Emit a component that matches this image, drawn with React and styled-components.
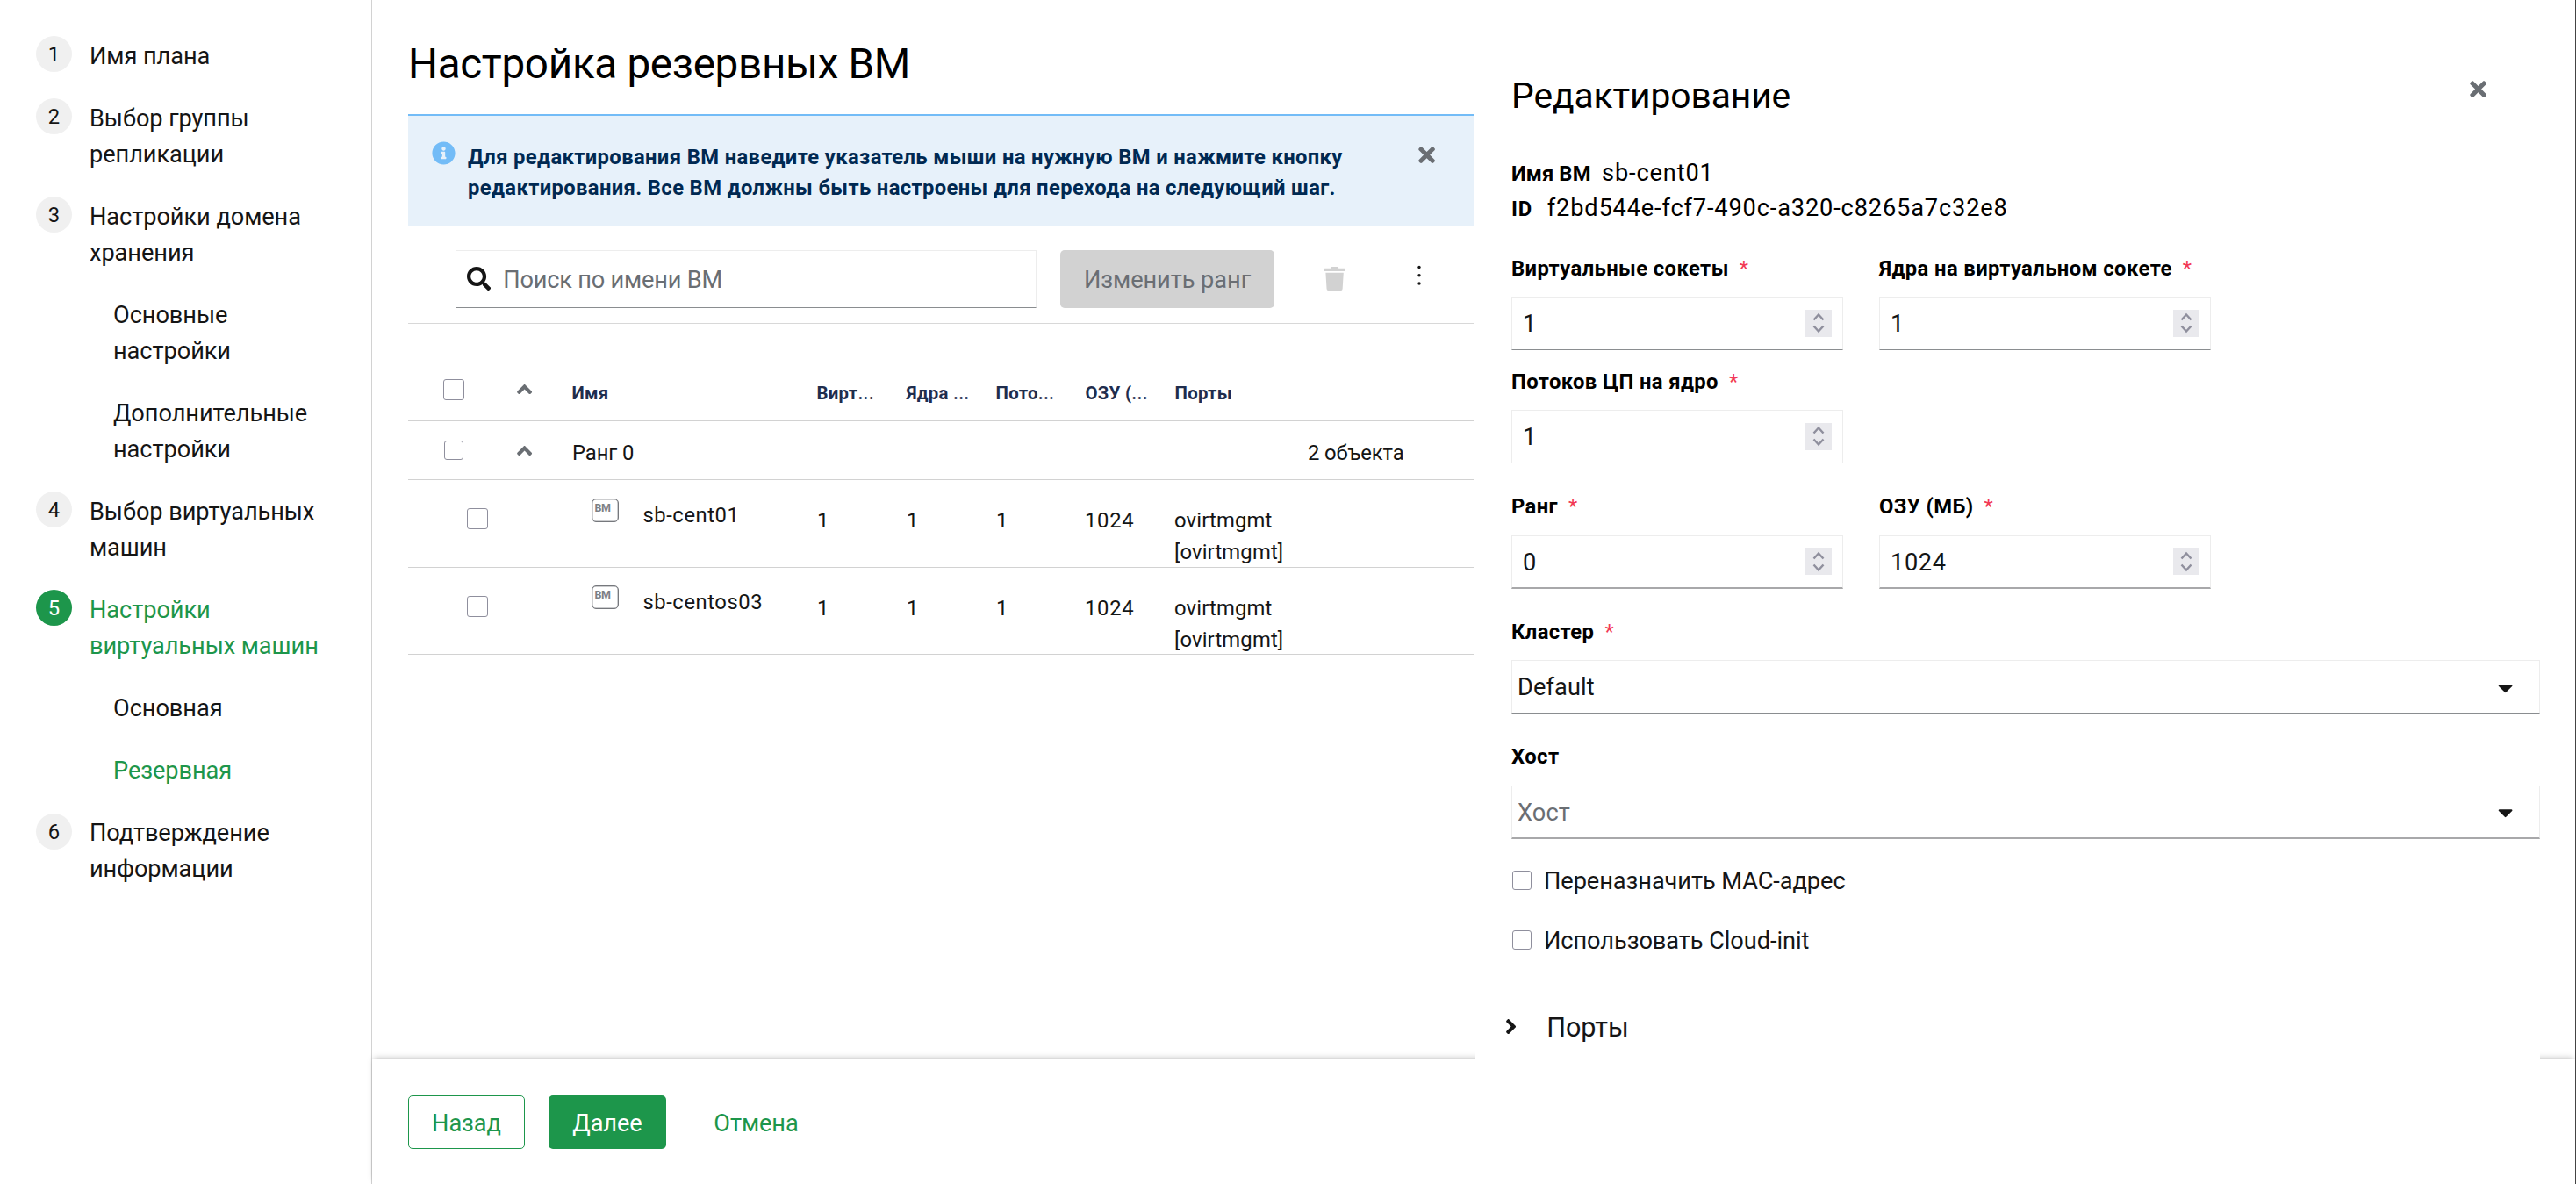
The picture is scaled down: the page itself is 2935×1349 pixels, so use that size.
import React, { useState } from 'react';
import styled, { createGlobalStyle, css } from 'styled-components';
import {
  FaAngleRight,
  FaAngleUp,
  FaCaretDown,
  FaInfoCircle,
  FaSearch,
  FaTimes,
  FaTrash,
} from 'react-icons/fa';

const GREEN = '#1d964b';
const TEXT = '#151515';
const MUTED = '#6a6e73';
const LINE = '#d2d2d2';

const GlobalStyle = createGlobalStyle`
  * {
    box-sizing: border-box;
  }
  body {
    margin: 0;
    background-color: #fff;
    color: ${TEXT};
    font-family: Roboto, 'Noto Sans', sans-serif;
    font-size: 27.2px;
  }
  button, input {
    font-family: inherit;
    font-size: inherit;
    letter-spacing: inherit;
  }
`;

const Page = styled.div`
  display: grid;
  grid-template-columns: 424px 1fr;
  height: 1349px;
  border-right: 1px solid #444;
  letter-spacing: -0.07px;
  white-space: nowrap;
  overflow: hidden;
`;

const Sidebar = styled.nav`
  border-right: 1px solid ${LINE};
  padding: 43.8px 0 0 41px;
`;

const Step = styled.div`
  display: flex;
  margin-bottom: 30.4px;
  padding-left: ${({ $sub }) => ($sub ? '88px' : '0')};
  line-height: 40.8px;
  color: ${({ $active }) => ($active ? GREEN : TEXT)};
`;

const StepNumber = styled.span`
  flex: none;
  width: 41px;
  height: 41px;
  margin: -2.6px 20px 0 0;
  border-radius: 50%;
  text-align: center;
  font-size: 23.8px;
  line-height: 42px;
  letter-spacing: 0;
  background-color: ${({ $active }) => ($active ? GREEN : '#f0f0f0')};
  color: ${({ $active }) => ($active ? '#fff' : TEXT)};
`;

const StepText = styled.span`
  white-space: pre-line;
`;

const Main = styled.main`
  display: grid;
  grid-template-rows: 1207px 142px;
`;

const Body = styled.div`
  position: relative;
  z-index: 1;
  display: flex;
  padding: 41px 40px 0 41px;
`;

const Content = styled.section`
  width: 1214px;
  margin-right: 1px;
`;

const Title = styled.h1`
  height: 89px;
  margin: 0;
  font-size: 47.6px;
  font-weight: 400;
  line-height: 64px;
  letter-spacing: -0.3px;
  color: #000;
`;

const Alert = styled.div`
  display: flex;
  height: 128px;
  padding: 29px 43px 0 27px;
  border-top: 2px solid #73bcf7;
  background-color: #e7f1fa;
`;

const InfoIcon = styled(FaInfoCircle)`
  flex: none;
  color: #73bcf7;
  font-size: 27px;
`;

const AlertText = styled.p`
  flex: 1;
  margin: 1px 0 0 14px;
  white-space: pre-line;
  font-size: 23.8px;
  font-weight: 700;
  line-height: 34.8px;
  letter-spacing: 0.36px;
  color: #002952;
`;

const IconButton = styled.button`
  display: flex;
  flex: none;
  padding: 0;
  border: none;
  background: none;
  color: ${({ $color }) => $color || MUTED};
  font-size: 27.2px;
  cursor: pointer;
`;

const AlertClose = styled(IconButton)`
  align-self: flex-start;
  margin-top: 2px;
  margin-right: -3px;
`;

const Toolbar = styled.div`
  display: flex;
  align-items: flex-start;
  height: 111px;
  padding: 27px 0 0 54px;
  border-bottom: 1px solid #d8d8d8;
`;

const fieldFrame = css`
  border: 1px solid #ededed;
  border-bottom-color: #8a8d90;
  background-color: #fff;
`;

const SearchBox = styled.label`
  display: flex;
  align-items: center;
  width: 662px;
  height: 66px;
  padding-left: 12px;
  ${fieldFrame}
`;

const SearchInput = styled.input`
  flex: 1;
  margin-left: 14px;
  padding: 2px 0 0;
  border: none;
  outline: none;
  background: none;
  letter-spacing: -0.2px;
  &::placeholder {
    color: ${MUTED};
    opacity: 1;
  }
`;

const Button = styled.button`
  height: ${({ $height }) => $height || 61}px;
  width: ${({ $width }) => $width}px;
  padding: 2px 0 0;
  border: 1px solid transparent;
  border-radius: 5px;
  white-space: nowrap;
  ${({ $kind }) =>
    ({
      primary: `background-color: ${GREEN}; color: #fff;`,
      secondary: `background-color: #fff; border-color: ${GREEN}; color: ${GREEN};`,
      disabled: `background-color: #d2d2d2; color: ${MUTED};`,
      link: `background: none; color: ${GREEN};`,
    })[$kind]}
`;

const RankButton = styled(Button)`
  margin: 0 55px 0 27px;
`;

const DeleteButton = styled(IconButton)`
  margin: 19px 80px 0 0;
`;

const KebabButton = styled(IconButton)`
  margin-top: 15.5px;
`;

const Row = styled.div`
  display: grid;
  grid-template-columns: 105px 68px 279px repeat(4, 102px) 151px 203px;
  height: ${({ $height }) => $height}px;
  border-bottom: 1px solid ${LINE};
`;

const Cell = styled.div`
  padding: ${({ $top }) => $top}px 0 0 ${({ $left }) => $left ?? 14}px;
  font-size: 23.8px;
  line-height: 35.7px;
  letter-spacing: ${({ $spacing }) => $spacing || -0.1}px;
  white-space: pre-line;
`;

const HeadCell = styled(Cell)`
  font-size: 20.4px;
  font-weight: 700;
  line-height: 30px;
  letter-spacing: 0.25px;
  white-space: nowrap;
  color: #1f2d4d;
`;

const Checkbox = styled.input.attrs({ type: 'checkbox' })`
  appearance: none;
  display: block;
  flex: none;
  width: ${({ $size }) => $size || 22}px;
  height: ${({ $size }) => $size || 22}px;
  margin: 0;
  border: 1px solid #8f8f9d;
  border-radius: 3px;
  background-color: #fff;
  &:checked {
    background-color: ${GREEN};
  }
`;

const NameCell = styled(Cell)`
  display: flex;
`;

const VmBadge = styled.span`
  width: 31px;
  height: 27px;
  margin-right: 28px;
  padding: 4px 0 0 3px;
  border: 1px solid #76787d;
  border-radius: 5px;
  box-shadow: inset 0 0 0 0.5px #9a9ca0;
  font-size: 12.5px;
  font-weight: 700;
  line-height: 12px;
  letter-spacing: -0.5px;
  color: #7d7f84;
`;

const MachineName = styled.span`
  padding-top: 2px;
`;

const Panel = styled.aside`
  flex: 1;
  padding: 40px 0 0 41px;
  border-left: 1px solid ${LINE};
  background-color: #fff;
`;

const PanelHead = styled.div`
  display: flex;
  justify-content: space-between;
  padding-right: 57px;
`;

const PanelTitle = styled.h2`
  margin: 0 0 39px;
  font-size: 40.8px;
  font-weight: 400;
  line-height: 56px;
  letter-spacing: -0.1px;
  color: #000;
`;

const PanelClose = styled(IconButton)`
  align-self: flex-start;
  margin-top: 7px;
`;

const Detail = styled.div`
  display: flex;
  align-items: baseline;
  height: 40.4px;
  padding-top: 0.5px;
  line-height: 40.4px;
  letter-spacing: 0.85px;
  color: #000;
`;

const DetailName = styled.b`
  min-width: 39.5px;
  margin-right: ${({ $short }) => ($short ? 0 : 12.5)}px;
  padding-right: ${({ $short }) => ($short ? 16.5 : 0)}px;
  font-size: 23.8px;
  letter-spacing: ${({ $short }) => ($short ? 0.9 : 0.1)}px;
`;

const Fields = styled.div`
  display: flex;
  gap: 41px;
  margin-top: ${({ $gap }) => $gap}px;
`;

const Field = styled.div`
  width: ${({ $wide }) => ($wide ? '100%' : '378px')};
`;

const Label = styled.div`
  height: ${({ $height }) => $height || 50}px;
  font-size: 23.8px;
  font-weight: 700;
  line-height: 36px;
  letter-spacing: 0.4px;
  color: #000;
`;

const Required = styled.span`
  margin-left: 12px;
  font-weight: 400;
  color: #f23a55;
`;

const InputFrame = styled.div`
  display: flex;
  align-items: center;
  justify-content: space-between;
  height: 61px;
  padding: 0 12px 0 12px;
  ${fieldFrame}
  ${({ $thick }) => $thick && 'border-bottom: 2px solid #a8a8aa;'}
`;

const NumberInput = styled.input`
  flex: 1;
  min-width: 0;
  padding: 2px 0 0;
  border: none;
  outline: none;
  background: none;
  letter-spacing: 0.6px;
  color: ${TEXT};
`;

const Spinner = styled.span`
  display: flex;
  align-items: center;
  justify-content: center;
  width: 30px;
  height: 31px;
  background-color: #e9e9ed;
`;

const SelectFrame = styled(InputFrame)`
  padding: 2px 25px 0 6px;
  letter-spacing: 0.1px;
  color: ${({ $empty }) => ($empty ? MUTED : TEXT)};
`;

const Caret = styled(FaCaretDown)`
  color: ${TEXT};
`;

const CheckRow = styled.label`
  display: flex;
  align-items: center;
  height: 40px;
  margin-top: ${({ $gap }) => $gap}px;
  padding-left: 1px;
`;

const CheckText = styled.span`
  margin-left: 14px;
  padding-top: 2px;
  line-height: 40px;
`;

const Expander = styled.div`
  display: flex;
  align-items: center;
  margin: 55px 0 0 -14px;
  font-size: 30.6px;
  line-height: 46px;
`;

const ExpanderText = styled.span`
  margin-left: 27px;
  padding-top: 2px;
`;

const Footer = styled.footer`
  display: flex;
  gap: 27px;
  padding: 41px 0 0 41px;
  background-color: #fff;
  box-shadow: 0 -3px 7px -2px rgba(3, 3, 3, 0.26);
`;

const steps = [
  { number: 1, text: 'Имя плана' },
  { number: 2, text: 'Выбор группы\nрепликации' },
  { number: 3, text: 'Настройки домена\nхранения' },
  { text: 'Основные\nнастройки' },
  { text: 'Дополнительные\nнастройки' },
  { number: 4, text: 'Выбор виртуальных\nмашин' },
  { number: 5, text: 'Настройки\nвиртуальных машин', active: true },
  { text: 'Основная' },
  { text: 'Резервная', active: true },
  { number: 6, text: 'Подтверждение\nинформации' },
];

const columns = ['Имя', 'Вирт...', 'Ядра ...', 'Пото...', 'ОЗУ (...', 'Порты'];

const machines = [
  { name: 'sb-cent01', height: 100, nameTop: 21 },
  { name: 'sb-centos03', height: 99, nameTop: 20 },
];

const Kebab = () => (
  <svg width="6" height="26" viewBox="0 0 6 26" fill={TEXT}>
    <circle cx="3" cy="3.5" r="1.7" />
    <circle cx="3" cy="12.8" r="1.7" />
    <circle cx="3" cy="22" r="1.7" />
  </svg>
);

const SpinArrows = () => (
  <Spinner>
    <svg
      width="14"
      height="24"
      viewBox="0 0 14 24"
      fill="none"
      stroke="#8f8f9d"
      strokeWidth="2.4"
    >
      <path d="M1.5 8.5 L7 2.5 L12.5 8.5" />
      <path d="M1.5 15.5 L7 21.5 L12.5 15.5" />
    </svg>
  </Spinner>
);

const NumberField = ({ label, value, labelHeight, thick }) => {
  const [number, setNumber] = useState(value);

  return (
    <Field>
      <Label $height={labelHeight}>
        {label}
        <Required>*</Required>
      </Label>
      <InputFrame $thick={thick}>
        <NumberInput
          value={number}
          onChange={(e) => setNumber(e.currentTarget.value)}
        />
        <SpinArrows />
      </InputFrame>
    </Field>
  );
};

const VmTable = () => (
  <>
    <Row $height={111}>
      <HeadCell $top={63} $left={40}>
        <Checkbox $size={24} />
      </HeadCell>
      <HeadCell $top={61}>
        <IconButton>
          <FaAngleUp />
        </IconButton>
      </HeadCell>
      {columns.map((column) => (
        <HeadCell key={column} $top={64} $left={13.5}>
          {column}
        </HeadCell>
      ))}
    </Row>
    <Row $height={67}>
      <Cell $top={22} $left={41}>
        <Checkbox />
      </Cell>
      <Cell $top={20}>
        <IconButton>
          <FaAngleUp />
        </IconButton>
      </Cell>
      <Cell $top={19}>Ранг 0</Cell>
      <Cell />
      <Cell />
      <Cell />
      <Cell />
      <Cell />
      <Cell $top={19}>2 объекта</Cell>
    </Row>
    {machines.map(({ name, height, nameTop }) => (
      <Row key={name} $height={height}>
        <Cell $top={32} $left={67}>
          <Checkbox $size={24} />
        </Cell>
        <Cell />
        <NameCell $top={nameTop} $left={35.5} $spacing={0.55}>
          <VmBadge>ВМ</VmBadge>
          <MachineName>{name}</MachineName>
        </NameCell>
        <Cell $top={29}>1</Cell>
        <Cell $top={29}>1</Cell>
        <Cell $top={29}>1</Cell>
        <Cell $top={29} $left={13} $spacing={0.7}>
          1024
        </Cell>
        <Cell $top={29} $left={13} $spacing={0.15}>
          {'ovirtmgmt\n[ovirtmgmt]'}
        </Cell>
      </Row>
    ))}
  </>
);

const EditPanel = () => (
  <Panel>
    <PanelHead>
      <PanelTitle>Редактирование</PanelTitle>
      <PanelClose>
        <FaTimes />
      </PanelClose>
    </PanelHead>
    <Detail>
      <DetailName>Имя ВМ</DetailName>
      sb-cent01
    </Detail>
    <Detail>
      <DetailName $short>ID</DetailName>
      f2bd544e-fcf7-490c-a320-c8265a7c32e8
    </Detail>
    <Fields $gap={31}>
      <NumberField label="Виртуальные сокеты" value="1" />
      <NumberField label="Ядра на виртуальном сокете" value="1" />
    </Fields>
    <Fields $gap={18}>
      <NumberField label="Потоков ЦП на ядро" value="1" />
    </Fields>
    <Fields $gap={31}>
      <NumberField label="Ранг" value="0" labelHeight={51} thick />
      <NumberField label="ОЗУ (МБ)" value="1024" labelHeight={51} thick />
    </Fields>
    <Fields $gap={31}>
      <Field $wide>
        <Label>
          Кластер
          <Required>*</Required>
        </Label>
        <SelectFrame>
          Default
          <Caret />
        </SelectFrame>
      </Field>
    </Fields>
    <Fields $gap={31}>
      <Field $wide>
        <Label $height={51}>Хост</Label>
        <SelectFrame $empty $thick>
          Хост
          <Caret />
        </SelectFrame>
      </Field>
    </Fields>
    <CheckRow $gap={27}>
      <Checkbox />
      <CheckText>Переназначить MAC-адрес</CheckText>
    </CheckRow>
    <CheckRow $gap={28}>
      <Checkbox />
      <CheckText>Использовать Cloud-init</CheckText>
    </CheckRow>
    <Expander>
      <FaAngleRight size={27.2} />
      <ExpanderText>Порты</ExpanderText>
    </Expander>
  </Panel>
);

const App = () => (
  <>
    <GlobalStyle />
    <Page>
      <Sidebar>
        {steps.map(({ number, text, active }, index) => (
          <Step key={index} $sub={!number} $active={active}>
            {number && <StepNumber $active={active}>{number}</StepNumber>}
            <StepText>{text}</StepText>
          </Step>
        ))}
      </Sidebar>
      <Main>
        <Body>
          <Content>
            <Title>Настройка резервных ВМ</Title>
            <Alert>
              <InfoIcon />
              <AlertText>
                {
                  'Для редактирования ВМ наведите указатель мыши на нужную ВМ и нажмите кнопку\nредактирования. Все ВМ должны быть настроены для перехода на следующий шаг.'
                }
              </AlertText>
              <AlertClose>
                <FaTimes />
              </AlertClose>
            </Alert>
            <Toolbar>
              <SearchBox>
                <FaSearch />
                <SearchInput placeholder="Поиск по имени ВМ" />
              </SearchBox>
              <RankButton $kind="disabled" $width={244} $height={66}>
                Изменить ранг
              </RankButton>
              <DeleteButton $color="#d2d2d2">
                <FaTrash />
              </DeleteButton>
              <KebabButton>
                <Kebab />
              </KebabButton>
            </Toolbar>
            <VmTable />
          </Content>
          <EditPanel />
        </Body>
        <Footer>
          <Button $kind="secondary" $width={133}>
            Назад
          </Button>
          <Button $kind="primary" $width={134}>
            Далее
          </Button>
          <Button $kind="link" $width={151}>
            Отмена
          </Button>
        </Footer>
      </Main>
    </Page>
  </>
);

export default App;
